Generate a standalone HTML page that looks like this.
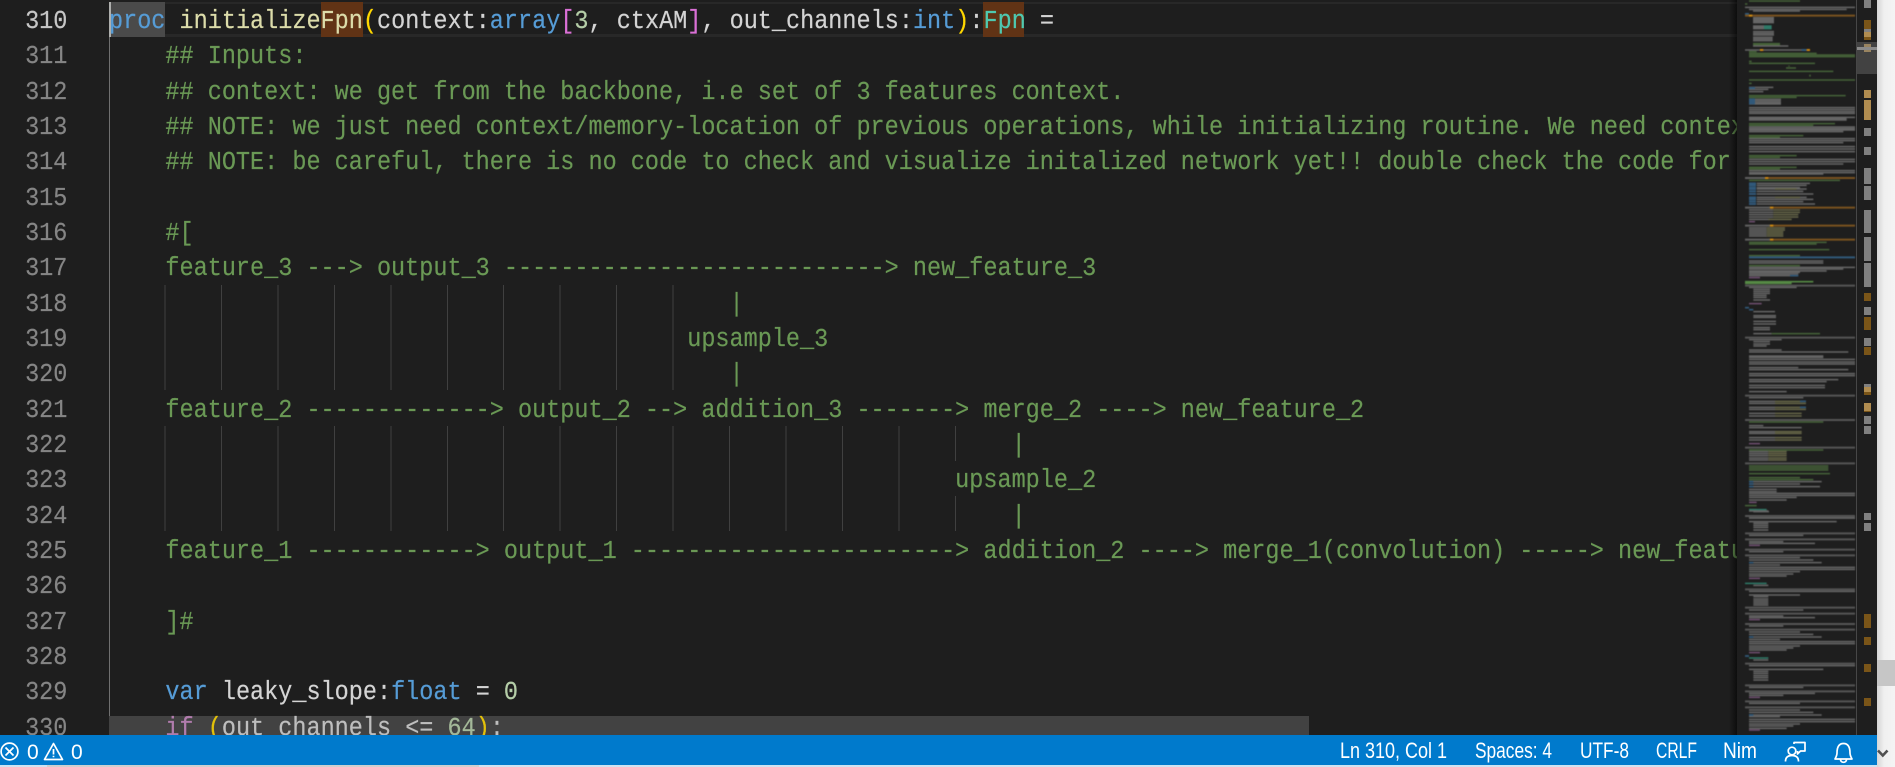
<!DOCTYPE html>
<html><head><meta charset="utf-8"><style>
html,body{margin:0;padding:0;background:#1e1e1e}
body{width:1895px;height:767px;overflow:hidden;position:relative;font-family:"Liberation Mono",monospace}
.a{position:absolute}
#nums,#code{position:absolute;top:4px;font-size:25.5px;line-height:35.33px;white-space:pre;margin:0;font-family:"Liberation Mono",monospace;transform:scaleX(.9216);transform-origin:0 0;-webkit-text-stroke:.2px currentColor}
#nums{left:25px;width:46px;text-align:right;color:#858585}
#nums b{font-weight:normal;color:#c6c6c6}
#code{left:109px;color:#d4d4d4;width:1766.5px;overflow:hidden;z-index:3}
#code div{height:35.33px}
.k{color:#569cd6}.f{color:#dcdcaa}.y{color:#ffd700}.p{color:#da70d6}.n{color:#b5cea8}.c{color:#6a9955}.t{color:#4ec9b0}.m{color:#c586c0}
</style></head><body>
<!-- current line -->
<div class="a" style="left:109px;top:2px;width:1628px;height:35px;box-sizing:border-box;border-top:2px solid #282828;border-bottom:3px solid #282828"></div>
<div class="a" style="left:109px;top:2px;width:56px;height:35px;background:#4a4a4a"></div>
<div class="a" style="left:320.5px;top:2px;width:42.3px;height:35px;background:#613315"></div>
<div class="a" style="left:983px;top:2px;width:41px;height:35px;background:#613315"></div>
<div class="a" style="left:109px;top:2px;width:2px;height:35px;background:#aeafad"></div>
<div class="a" style="left:109px;top:37px;width:1px;height:698px;background:#707070"></div>
<div class="a" style="left:109px;top:716px;width:1200px;height:19px;background:#424242"></div>
<!-- guides -->
<svg class="a" style="left:0;top:0" width="1737" height="735"><path fill="none" stroke="#404040" stroke-width="1" d="M165 285V390M221.5 285V390M278 285V390M334.5 285V390M391 285V390M447.5 285V390M503.5 285V390M560 285V390M616.5 285V390M673 285V390M165 426V531M221.5 426V531M278 426V531M334.5 426V531M391 426V531M447.5 426V531M503.5 426V531M560 426V531M616.5 426V531M673 426V531M729.5 426V531M786 426V531M842.5 426V531M899 426V531M955.5 426V461M955.5 496V531"/></svg>
<pre id="nums"><b>310</b>
311
312
313
314
315
316
317
318
319
320
321
322
323
324
325
326
327
328
329
330</pre>
<div id="code"><div><span class="k">proc</span> <span class="f">initializeFpn</span><span class="y">(</span>context:<span class="k">array</span><span class="p">[</span><span class="n">3</span>, ctxAM<span class="p">]</span>, out_channels:<span class="k">int</span><span class="y">)</span>:<span class="t">Fpn</span> =</div><div class="c">    ## Inputs:</div><div class="c">    ## context: we get from the backbone, i.e set of 3 features context.</div><div class="c">    ## NOTE: we just need context/memory-location of previous operations, while initializing routine. We need context of</div><div class="c">    ## NOTE: be careful, there is no code to check and visualize initalized network yet!! double check the code for errors</div><div> </div><div class="c">    #[</div><div class="c">    feature_3 ---> output_3 ---------------------------> new_feature_3</div><div class="c">                                            |</div><div class="c">                                         upsample_3</div><div class="c">                                            |</div><div class="c">    feature_2 -------------> output_2 --> addition_3 -------> merge_2 ----> new_feature_2</div><div class="c">                                                                |</div><div class="c">                                                            upsample_2</div><div class="c">                                                                |</div><div class="c">    feature_1 ------------> output_1 -----------------------> addition_2 ----> merge_1(convolution) -----> new_feature_1</div><div> </div><div class="c">    ]#</div><div> </div><div>    <span class="k">var</span> leaky_slope:<span class="k">float</span> = <span class="n">0</span></div><div style="opacity:.85">    <span class="m">if</span> <span class="y">(</span>out_channels &lt;= <span class="n">64</span><span class="y">)</span>:</div></div>
<!-- minimap -->
<div class="a" style="left:1737px;top:0;width:140px;height:735px;background:#1e1e1e;z-index:4"></div>
<div class="a" style="left:1729px;top:0;width:8px;height:735px;background:linear-gradient(90deg,rgba(0,0,0,0),rgba(0,0,0,.55));z-index:4"></div>
<svg class="a" style="left:0;top:0;z-index:5" width="1895" height="767" fill="none">
<g style="filter:blur(.45px)" stroke-width="4.5">
<g transform="translate(1700,0) scale(.33333)">
<path stroke="#466339" d="M147 3H300M135 12H142M159 131H240M159 135H240M147 155H170M147 160H350M147 165H465M147 170H465M147 184H155M147 190H345M267 197V200M258 204H288M147 214H400M330 224V230M147 240H465M147 250H155M147 287H437M147 292H290M147 371H405M147 376H340M147 407H310M147 412H240M147 467H290M147 472H240M147 502H290M147 507H240M147 541H420M147 727H380M147 732H350M147 749H388M147 767H300"/>
<path stroke="#666" d="M135 22H465M147 28H440M159 33H300M159 53H222M159 56H222M159 60H222M159 64H222M159 68H222M159 78H192M159 82H192M159 86H192M159 95H222M159 100H222M159 105H222M159 112H218M159 117H218M159 122H218M159 138H265M135 150H180M190 150H320M147 262H220M147 268H205M147 275H190M147 298H243M147 303H243M147 308H243M147 312H243M147 323H465M147 329H465M147 335H465M147 340H465M147 352H465M147 356H440M147 360H440M147 381H465M147 386H465M147 390H465M147 395H430M147 416H465M147 422H465M147 428H430M147 440H465M147 447H465M147 455H465M147 478H465M147 485H465M147 492H430M147 512H465M147 518H465M147 522H370M170 550H330M170 556H320M170 563H300M170 567H320M170 574H310M170 582H340M170 592H320M170 598H340M170 605H310M170 612H345M147 630H220M147 637H220M147 644H220M147 651H220M147 658H210M147 684H200M147 690H200M147 696H200M147 702H200M147 708H200"/>
<path stroke="#666648" d="M220 630H300M220 637H300M220 644H295M220 651H295M205 658H275M200 684H255M200 690H255M200 696H250M200 702H250M200 708H250M225 567H290M225 592H300"/>
<path stroke="#31597a" stroke-width="6" d="M135 42H147M180 150H190M305 150H320M147 264H165M147 298H165M147 304H165M147 310H165M147 550H168M147 556H168M147 563H168M147 567H168M147 574H168M147 582H168M147 592H168M147 598H168M147 605H168M147 612H168M147 772H465"/>
<path stroke="#2f7a68" d="M192 78H215M192 82H215M192 86H215"/>
<path stroke="#6f4f70" d="M147 665H165"/>
<path stroke="#7a5220" stroke-width="6" d="M135 47H465M190 534H465M205 623H465M205 677H465M205 719H465"/>
<path stroke="#606060" stroke-width="6" d="M135 534H195M135 623H210M135 677H210M135 719H210"/>
<path stroke="#d08a12" stroke-width="6" d="M147 47H157M180 150H190M320 150H330M195 534H205M210 623H220M210 677H220M210 719H220"/>
</g>
<g transform="translate(1700,260) scale(.33333)">
<path stroke="#466339" d="M147 17H300M147 486H370M147 570H370M147 618H385M147 624H385M147 630H385M147 641H390M147 653H300M147 659H340M135 737H170M147 749H170"/>
<path stroke="#568a45" stroke-width="5" d="M135 65H340M135 70H275"/>
<path stroke="#666" d="M147 3H370M147 9H370M147 22H465M147 27H430M147 33H380M147 37H300M147 42H295M147 47H270M147 82H290M160 88H210M160 94H210M160 100H210M160 106H200M160 112H200M160 120H210M160 155H225M160 167H228M160 172H228M160 184H228M160 192H228M160 203H210M160 209H210M160 221H215M147 239H245M160 245H210M160 252H210M160 258H200M147 270H245M147 276H445M147 288H370M147 292H370M147 298H465M147 306H465M147 312H465M147 323H295M147 329H445M147 341H465M147 347H465M147 359H415M147 365H380M147 376H375M147 383H375M147 395H260M147 413H310M147 424H225M147 430H225M147 442H225M147 448H225M147 460H225M147 468H225M147 497H190M147 503H305M147 515H225M147 520H225M147 533H225M147 540H225M147 575H205M147 581H205M147 587H205M147 594H205M147 600H205M147 665H365M147 672H300M147 680H360M147 688H230M147 695H230M147 700H465M147 706H465M147 712H290M147 720H260M160 755H207"/>
<path stroke="#666648" d="M225 424H318M225 430H318M225 442H318M225 448H318M225 460H305M225 468H305M225 515H305M225 520H305M225 533H305M225 540H305M205 575H260M205 581H260M205 587H260M205 594H260M205 600H260"/>
<path stroke="#466339" d="M215 221H360"/>
<path stroke="#31597a" stroke-width="5" d="M135 143H147M147 149H160M270 47H295M300 424H318M300 442H318M147 665H160M147 672H160M147 680H160"/>
<path stroke="#2f7a68" d="M147 749H200"/>
<path stroke="#6f4f70" d="M147 53H180M147 131H185M147 551H180M147 727H170"/>
<path stroke="#555" stroke-width="6" d="M135 77H465M135 233H465M135 407H465M135 480H465M135 563H465M135 610H465M135 768H465"/>
<path stroke="#666" d="M147 774H465"/>
</g>
<g transform="translate(1700,510) scale(.33333)">
<path stroke="#555" stroke-width="6" d="M135 18H465M135 70H465M135 88H465M135 119H465M135 136H465M135 238H465M135 293H465M135 311H465M135 342H465M135 359H465M135 461H465M135 526H465M135 544H465M135 574H465M135 592H465"/>
<path stroke="#666" d="M147 3H205M147 24H465M147 35H410M160 40H205M160 46H205M160 52H205M160 60H205M147 76H310M147 95H250M147 100H345M147 125H250M147 143H300M147 150H340M147 158H365M147 165H240M147 172H465M147 178H465M147 185H300M147 192H280M147 198H260M160 226H205M147 244H465M147 255H300M160 260H205M160 267H205M160 273H205M160 279H205M160 285H205M147 300H310M147 318H250M147 323H345M147 348H250M147 366H300M147 373H340M147 381H365M147 388H240M147 395H465M147 401H465M147 408H300M147 414H280M147 420H260M160 450H205M147 467H465M147 478H370M160 484H205M160 490H205M160 497H205M160 503H205M160 510H205M147 532H310M147 550H345M147 556H250M147 580H300M147 600H300M147 607H340M147 615H365M147 620H240M147 628H465M147 635H465M147 642H300M147 648H280M147 655H260"/>
<path stroke="#6f4f70" d="M147 106H180M147 205H180M147 329H180M147 428H180M147 562H180M147 660H180"/>
<path stroke="#2f7a68" d="M135 220H200M147 444H205"/>
<path stroke="#31597a" stroke-width="5" d="M135 438H147M147 158H160M147 381H160M147 615H160"/>
</g>
</g>
</svg>
<!-- overview ruler -->
<div class="a" style="left:1856px;top:0;width:21px;height:735px;background:#1e1e1e;z-index:6;box-sizing:border-box;border-left:1px solid #474747"></div>
<svg class="a" style="left:1857px;top:0;z-index:7" width="20" height="735">
<g transform="translate(7,0)">
<g fill="#808080"><rect y="0" width="7" height="8"/><rect y="128" width="7" height="8"/><rect y="147" width="7" height="8"/><rect y="168" width="7" height="16"/><rect y="186" width="7" height="14"/><rect y="210" width="7" height="23"/><rect y="237" width="7" height="24"/><rect y="263" width="7" height="24"/><rect y="307" width="7" height="8"/><rect y="338" width="7" height="8"/><rect y="384" width="7" height="3"/><rect y="416" width="7" height="8"/><rect y="426" width="7" height="8"/><rect y="513" width="7" height="7"/><rect y="523" width="7" height="8"/><rect y="29" width="7" height="3"/></g>
<g fill="#7a5518"><rect y="20" width="7" height="9"/><rect y="37" width="7" height="3"/><rect y="293" width="7" height="8"/><rect y="317" width="7" height="13"/><rect y="347" width="7" height="8"/><rect y="392" width="7" height="3"/><rect y="411" width="7" height="1"/><rect y="614" width="7" height="14"/><rect y="637" width="7" height="8"/><rect y="664" width="7" height="8"/><rect y="698" width="7" height="8"/></g>
<g fill="#b08c50"><rect y="32" width="7" height="5"/><rect y="44" width="7" height="8"/><rect y="90" width="7" height="8"/><rect y="100" width="7" height="20"/><rect y="387" width="7" height="5"/><rect y="403" width="7" height="8"/></g>
</g>
<rect x="0" y="42" width="20" height="32" fill="rgba(121,121,121,.4)"/>
<rect x="0" y="47" width="20" height="3" fill="#8a8a8a"/>
</svg>
<!-- right scrollbar -->
<div class="a" style="left:1877px;top:0;width:18px;height:767px;background:linear-gradient(90deg,#d6d6d6,#f0f0f0 40%,#f4f4f4);z-index:8"></div>
<div class="a" style="left:1877px;top:660px;width:18px;height:26px;background:#c6c6c6;z-index:9"></div>
<!-- status bar -->
<div class="a" style="left:0;top:765px;width:1877px;height:2px;background:#cfe3f2;z-index:8"></div>
<div class="a" style="left:47px;top:765px;width:432px;height:2px;background:#cfcfcf;z-index:8"></div>
<div class="a" style="left:0;top:735px;width:1877px;height:30px;background:#007acc;z-index:9"></div>
<svg class="a" style="left:0;top:0;z-index:10" width="1895" height="767" fill="none">
<g fill="#fff" font-family="'Liberation Sans',sans-serif" font-size="22" stroke="none">
<text x="27" y="759" font-size="21">0</text>
<text x="71" y="759" font-size="21">0</text>
<text x="1340" y="758" textLength="107" lengthAdjust="spacingAndGlyphs">Ln 310, Col 1</text>
<text x="1475" y="758" textLength="77" lengthAdjust="spacingAndGlyphs">Spaces: 4</text>
<text x="1580" y="758" textLength="49" lengthAdjust="spacingAndGlyphs">UTF-8</text>
<text x="1656" y="758" textLength="41" lengthAdjust="spacingAndGlyphs">CRLF</text>
<text x="1723" y="758" textLength="34" lengthAdjust="spacingAndGlyphs">Nim</text>
</g>
<g stroke="#fff" stroke-width="1.7">
<circle cx="9.5" cy="751.5" r="8.4"/>
<path d="M5.5 747.5L13.5 755.5M13.5 747.5L5.5 755.5"/>
<path d="M53.5 743.5L62.5 759.5H44.5Z" stroke-linejoin="round"/>
<path d="M53.5 749V754.5M53.5 755.7V757.3"/>
<path d="M1843.5 743.5C1838 743.5 1837 748.5 1837 753C1837 755.5 1836 757 1835 759H1852C1851 757 1850 755.5 1850 753C1850 748.5 1849 743.5 1843.5 743.5Z" stroke-linejoin="round"/>
<path d="M1840.5 759.5a3 2.8 0 0 0 6 0"/>
<path d="M1794 744V742.5H1805V751H1800.5L1797.5 754V751" stroke-linejoin="round"/>
<circle cx="1792" cy="751" r="3.8"/>
<path d="M1785.5 761.5C1785.5 757 1788.5 755.5 1792 755.5C1795.5 755.5 1798.5 757 1798.5 761.5"/>
</g>
<path d="M1878 750.5L1882.8 755.5L1887.5 750.5" stroke="#505050" stroke-width="2.6"/>
</svg>
</body></html>
